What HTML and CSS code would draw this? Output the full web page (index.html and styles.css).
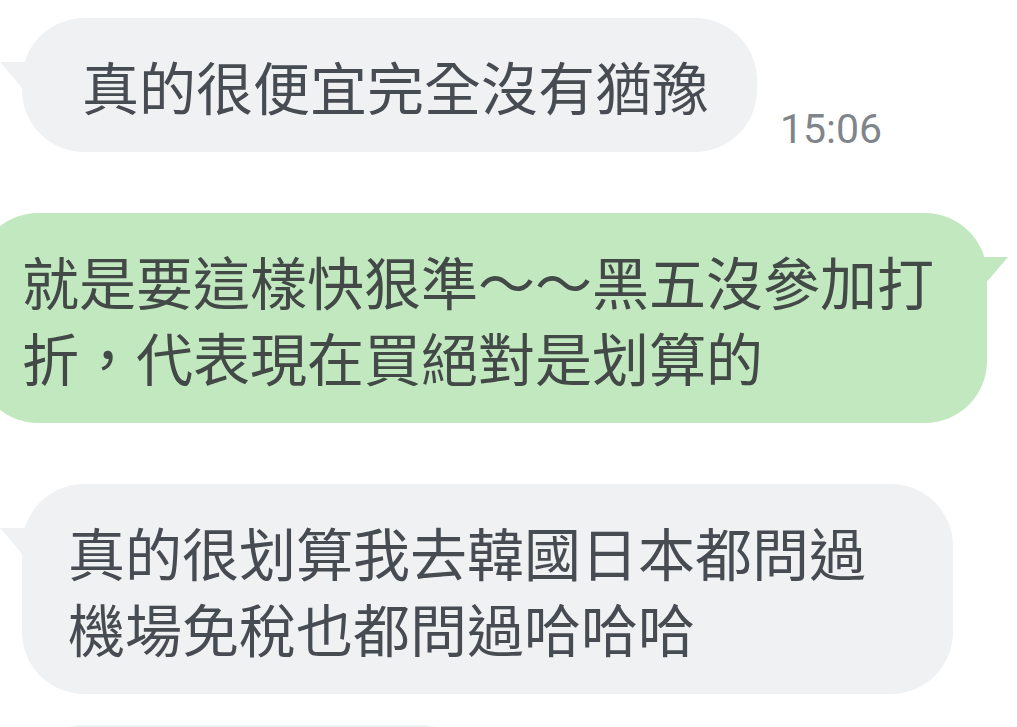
FILE: index.html
```html
<!DOCTYPE html>
<html lang="zh-Hant">
<head>
<meta charset="utf-8">
<title>Chat</title>
<link rel="stylesheet" href="styles.css">
</head>
<body>
<main class="chat">
  <div class="row row-first">
    <div class="bubble in tail-in b1">真的很便宜完全沒有猶豫</div>
    <span class="time">15:06</span>
  </div>
  <div class="row row-out">
    <div class="bubble out tail-out b2">就是要這樣快狠準～～黑五沒參加打<br>折，代表現在買絕對是划算的</div>
  </div>
  <div class="row">
    <div class="bubble in tail-in b3">真的很划算我去韓國日本都問過<br>機場免稅也都問過哈哈哈</div>
  </div>
  <div class="row row-cont">
    <div class="bubble in b4"></div>
  </div>
</main>
</body>
</html>
```

FILE: styles.css
```css
html, body {
  margin: 0;
  padding: 0;
  background: #ffffff;
  overflow: hidden;
}

.chat {
  display: flex;
  flex-direction: column;
  height: 727px;
  overflow: hidden;
  font-family: "Noto Sans CJK TC", "Noto Sans", sans-serif;
  font-size: 57px;
  line-height: 76px;
}

.row {
  display: flex;
  flex-shrink: 0;
  align-items: flex-end;
  margin-top: 61px;
  padding-left: 22px;
}

.row-first {
  margin-top: 18px;
}

.row-out {
  padding-left: 0;
  margin-left: -24px;
}

.row-cont {
  margin-top: 31px;
}

.bubble {
  position: relative;
  box-sizing: border-box;
  padding: 29px 46px;
  border-radius: 62px;
  color: #474c53;
  white-space: nowrap;
}

.in {
  background: #f0f1f3;
}

.out {
  background: #c2e8c0;
  color: #434947;
}

.tail-in::before,
.tail-out::before {
  content: "";
  position: absolute;
  top: 44px;
  width: 40px;
  height: 47px;
}

.tail-in::before {
  left: -22px;
  background: #f0f1f3;
  clip-path: polygon(0 0, 100% 0, 100% 100%);
}

.tail-out::before {
  right: -21px;
  background: #c2e8c0;
  clip-path: polygon(0 0, 100% 0, 0 100%);
}

.b1 {
  width: 735px;
  padding-left: 60px;
}

.b2 {
  width: 1011px;
}

.b3 {
  width: 931px;
}

.b4 {
  width: 460px;
  height: 134px;
}

.time {
  font-family: Roboto, "Liberation Sans", sans-serif;
  font-size: 41px;
  line-height: 41px;
  color: #80858b;
  margin-left: 23px;
  margin-bottom: 2px;
}
```
